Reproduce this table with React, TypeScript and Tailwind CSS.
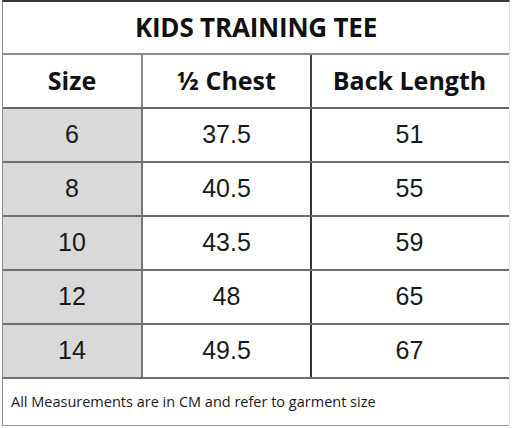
import React from "react";

const rows = [
  ["6", "37.5", "51"],
  ["8", "40.5", "55"],
  ["10", "43.5", "59"],
  ["12", "48", "65"],
  ["14", "49.5", "67"],
];

export default function App() {
  return (
    <div className="w-[512px] h-[428px] bg-white overflow-hidden">
      <div className="ml-[2px] w-[508px] border-t-2 border-t-[#3a3a3a] border-l border-l-[#8c8c8c] border-r border-r-[#e4e4e4]">
        <div
          className="h-[53px] flex items-center justify-center border-b-2 border-b-[#8a8a8a] text-[26px] font-bold text-[#111] tracking-[-0.2px]"
          style={{ fontFamily: '"Open Sans", sans-serif' }}
        >
          KIDS TRAINING TEE
        </div>
        <div
          className="grid grid-cols-[140px_169px_195px] h-[54px] border-b-2 border-b-[#666] text-[25px] font-bold text-[#111]"
          style={{ fontFamily: '"Open Sans", sans-serif' }}
        >
          <div className="flex items-center justify-center border-r-2 border-r-[#888]">Size</div>
          <div className="flex items-center justify-center border-r-2 border-r-[#444]">½ Chest</div>
          <div className="flex items-center justify-center">Back Length</div>
        </div>
        {rows.map((r, i) => (
          <div
            key={i}
            className="grid grid-cols-[140px_169px_195px] h-[54px] border-b-2 border-b-[#6e6e6e] text-[25px] text-[#1a1a1a]"
            style={{ fontFamily: '"Liberation Sans", Arial, sans-serif' }}
          >
            <div className="flex items-center justify-center bg-[#d9d9d9] border-r-2 border-r-[#777]">{r[0]}</div>
            <div className="flex items-center justify-center border-r-2 border-r-[#333]">{r[1]}</div>
            <div className="flex items-center justify-center">{r[2]}</div>
          </div>
        ))}
        <div
          className="h-[47px] flex items-center pl-[8px] border-b border-b-[#9a9a9a] text-[14.5px] text-[#1a1a1a]"
          style={{ fontFamily: '"Open Sans", sans-serif' }}
        >
          All Measurements are in CM and refer to garment size
        </div>
      </div>
    </div>
  );
}
